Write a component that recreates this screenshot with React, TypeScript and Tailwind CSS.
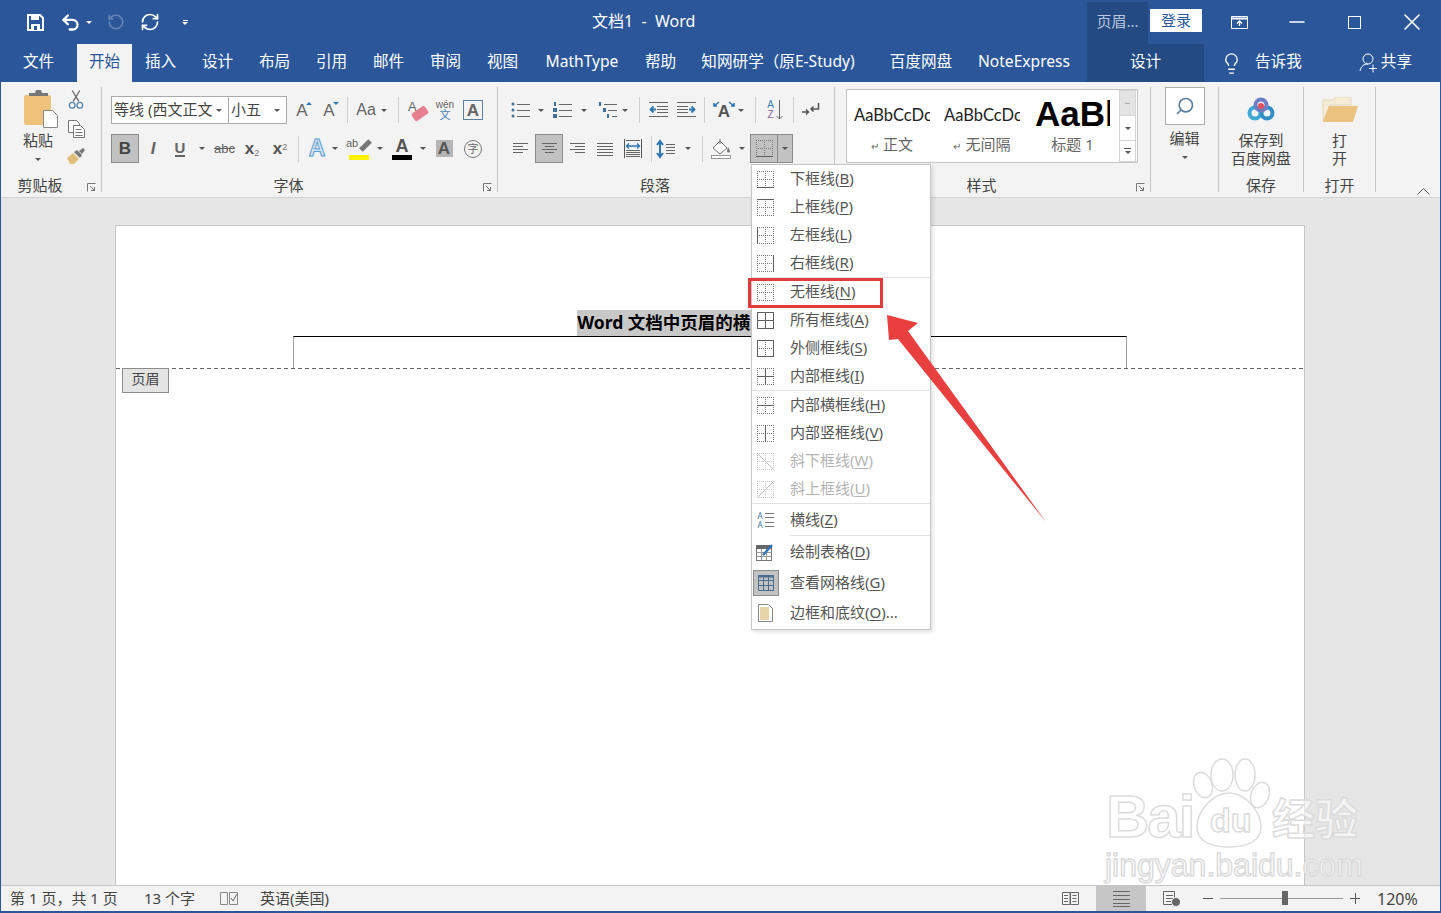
import { ReactNode } from 'react';
import { Lightbulb, Minus, RefreshCw, RotateCw, Search, Undo2, X } from 'lucide-react';

const Caret = ({ white }: { white?: boolean }) => (
  <span className={`block h-0 w-0 border-x-[3px] border-t-[3px] border-x-transparent ${white ? 'border-t-white' : 'border-t-[#555]'}`} />
);

function Cell({ className = '', children }: { className?: string; children?: ReactNode }) {
  return <div className={`flex h-full shrink-0 items-center justify-center ${className}`}>{children}</div>;
}

const CaretCell = ({ className }: { className: string }) => (
  <Cell className={className}>
    <Caret />
  </Cell>
);

const RowSep = ({ className }: { className: string }) => (
  <Cell className={className}>
    <div className="h-[26px] w-px bg-[#cfcfcf]" />
  </Cell>
);

function Launcher() {
  return (
    <svg width="9" height="9" viewBox="0 0 9 9" className="absolute bottom-[5px] right-[5px]" fill="none" stroke="#777">
      <path d="M.5 8.500v-8h8M3 3l4.500 4.500M7.500 4v3.500H4" />
    </svg>
  );
}

function GroupLabel({ label, launcher }: { label: string; launcher?: boolean }) {
  return (
    <div className={`relative mt-auto flex h-[22px] w-full items-center justify-center pb-[1px] leading-none ${launcher ? 'pr-[22px]' : ''}`}>
      {label}
      {launcher && <Launcher />}
    </div>
  );
}

const GroupSep = () => <div className="mt-[5px] h-[105px] w-px shrink-0 bg-[#c6c6c6]" />;

// horizontal text lines, used by the paragraph buttons
function Lines({ rows, w = 16 }: { rows: [number, number, number][]; w?: number }) {
  return (
    <svg width={w} height="16" viewBox={`0 0 ${w} 16`} stroke="#666" fill="none">
      {rows.map(([a, b, y]) => (
        <line key={y} x1={a} x2={b} y1={y + 0.5} y2={y + 0.5} />
      ))}
    </svg>
  );
}

function ListIcon({ kind }: { kind: 'bullet' | 'number' | 'multi' }) {
  return (
    <svg width="20" height="18" viewBox="0 0 20 18" fill="none">
      {kind === 'bullet' && (
        <g fill="#3f6f9f">
          <circle cx="2" cy="3" r="1.500" />
          <circle cx="2" cy="9" r="1.500" />
          <circle cx="2" cy="15" r="1.500" />
        </g>
      )}
      {kind === 'number' && (
        <g fill="#3f6f9f">
          <rect x="1" y="1" width="2" height="4" />
          <rect x="0" y="7" width="4" height="4" />
          <rect x="0" y="13" width="4" height="4" />
        </g>
      )}
      {kind === 'multi' && (
        <g fill="#3f6f9f">
          <rect x="1" y="1" width="2" height="4" />
          <rect x="5" y="7" width="3" height="4" />
          <rect x="9" y="13" width="2" height="4" />
        </g>
      )}
      <g stroke="#666">
        <line x1={6} x2="19" y1="3.500" y2="3.500" />
        <line x1={kind === 'multi' ? 10 : 6} x2="19" y1="9.500" y2="9.500" />
        <line x1={kind === 'multi' ? 14 : 6} x2="19" y1="15.500" y2="15.500" />
      </g>
    </svg>
  );
}

function IndentIcon({ flip }: { flip?: boolean }) {
  return (
    <svg width="19" height="16" viewBox="0 0 19 16" className={`shrink-0 ${flip ? '-scale-x-100' : ''}`} fill="none">
      <path d="M0 .500h19M8 4.500h11M8 7.500h11M8 10.500h11M0 14.500h19" stroke="#666" />
      <path d="M7 7.500H2M4.500 4.500l-3 3 3 3" stroke="#2f76b5" strokeWidth="1.800" />
    </svg>
  );
}

function BorderIcon({ t, b, l, r, h, v, d, u, dim }: { t?: boolean; b?: boolean; l?: boolean; r?: boolean; h?: boolean; v?: boolean; d?: boolean; u?: boolean; dim?: boolean }) {
  const solid = dim ? '#bdbdbd' : '#5f5f5f';
  return (
    <svg width="17" height="17" viewBox="0 0 17 17" fill="none" className="shrink-0">
      <path d="M0 .500h17M0 8.500h17M0 16.500h17M.5 0v17M8.500 0v17M16.500 0v17" stroke={dim ? '#c8c8c8' : '#777'} strokeDasharray="1 1" />
      <g stroke={solid}>
        {t && <path d="M0 .500h17" />}
        {b && <path d="M0 16.500h17" />}
        {l && <path d="M.5 0v17" />}
        {r && <path d="M16.500 0v17" />}
        {h && <path d="M0 8.500h17" />}
        {v && <path d="M8.500 0v17" />}
        {d && <path d="M0 0l17 17" />}
        {u && <path d="M0 17L17 0" />}
      </g>
    </svg>
  );
}

function Mnemonic({ label, k, tail = '' }: { label: string; k: string; tail?: string }) {
  return (
    <span>
      {label}(<span className="underline underline-offset-2">{k}</span>){tail}
    </span>
  );
}

function MenuRow({ icon, label, k, tail, className = 'h-[28px]', dim }: { icon: ReactNode; label: string; k: string; tail?: string; className?: string; dim?: boolean }) {
  return (
    <div className={`flex items-center ${className} ${dim ? 'text-[#b4b4b4]' : 'text-[#555]'}`}>
      <div className="ml-[5px] flex w-[17px] justify-center">{icon}</div>
      <div className="ml-[16px] pb-[1px]">
        <Mnemonic label={label} k={k} tail={tail} />
      </div>
    </div>
  );
}

const MenuSep = () => <div className="h-px bg-[#e3e3e3]" />;

const HrLine = () => (
  <div className="flex items-center gap-[2px] text-[8px] leading-[7px] text-[#3f6f9f]">
    A
    <div className="h-[5px] w-[9px] border-y border-[#777]" />
  </div>
);

function BorderMenu() {
  return (
    <div className="absolute left-[751px] top-[164px] h-[466px] w-[180px] border border-[#c6c6c6] bg-white text-[15px] leading-none shadow-[2px_2px_4px_rgba(0,0,0,0.12)]">
      <MenuRow icon={<BorderIcon b />} label="下框线" k="B" />
      <MenuRow icon={<BorderIcon t />} label="上框线" k="P" />
      <MenuRow icon={<BorderIcon l />} label="左框线" k="L" />
      <MenuRow icon={<BorderIcon r />} label="右框线" k="R" />
      <MenuSep />
      <MenuRow icon={<BorderIcon />} label="无框线" k="N" />
      <MenuRow icon={<BorderIcon t b l r h v />} label="所有框线" k="A" />
      <MenuRow icon={<BorderIcon t b l r />} label="外侧框线" k="S" />
      <MenuRow icon={<BorderIcon h v />} label="内部框线" k="I" />
      <MenuSep />
      <MenuRow icon={<BorderIcon h />} label="内部横框线" k="H" />
      <MenuRow icon={<BorderIcon v />} label="内部竖框线" k="V" />
      <MenuRow icon={<BorderIcon d dim />} label="斜下框线" k="W" dim />
      <MenuRow icon={<BorderIcon u dim />} label="斜上框线" k="U" dim />
      <MenuSep />
      <MenuRow
        className="h-[31px]"
        k="Z"
        label="横线"
        icon={
          <div className="flex flex-col gap-[2px]">
            <HrLine />
            <HrLine />
          </div>
        }
      />
      <div className="ml-[38px] h-px bg-[#e3e3e3]" />
      <MenuRow
        className="h-[32px]"
        k="D"
        label="绘制表格"
        icon={
          <svg width="19" height="19" viewBox="0 0 19 19" fill="none" className="shrink-0">
            <rect x=".5" y="2.500" width="15" height="15" stroke="#777" />
            <rect x="0" y="2" width="16" height="4" fill="#666" />
            <path d="M.5 9.500h15M.5 13.500h15M5.500 6v11M10.500 6v11" stroke="#999" />
            <path d="M7 12l9-10" stroke="#2f76b5" strokeWidth="2.500" />
          </svg>
        }
      />
      <div className="flex h-[30px] items-center text-[#555]">
        <div className="ml-px flex h-[26px] w-[26px] items-center justify-center border border-[#8c8c8c] bg-[#c2c2c2]">
          <svg width="16" height="16" viewBox="0 0 16 16" fill="none" stroke="#4a6f8f">
            <path d="M.5.500h15v15H.5zM.5 5.500h15M.5 10.500h15M5.500.500v15M10.500.500v15" />
            <path d="M0 1.500h16" strokeWidth="2" />
          </svg>
        </div>
        <div className="ml-[11px] pb-[1px]">
          <Mnemonic label="查看网格线" k="G" />
        </div>
      </div>
      <MenuRow
        className="h-[30px]"
        k="O"
        label="边框和底纹"
        tail="..."
        icon={
          <svg width="15" height="18" viewBox="0 0 15 18">
            <path d="M.5.500h10l4 4v13H.5z" fill="#fff" stroke="#888" />
            <rect x="2" y="3" width="9" height="13" fill="#e5d5a8" />
          </svg>
        }
      />
    </div>
  );
}

function Clipboard() {
  return (
    <div className="flex w-[100px] shrink-0 flex-col">
      <div className="ml-[7px] flex h-[93px] pt-[8px]">
        <div className="flex w-[60px] flex-col items-center">
          <svg width="36" height="38" viewBox="0 0 36 38" className="ml-[5px] shrink-0">
            <rect x="1" y="5" width="27" height="30" rx="2" fill="#eec27a" />
            <path d="M6 6V3h6l1-3h5l1 3h6v3z" fill="#777" />
            <path d="M20.500 20.500h9l5 5v12h-14z" fill="#fff" stroke="#888" />
          </svg>
          <div className="mt-[2px] leading-[20px]">粘贴</div>
          <div className="mt-[8px]">
            <Caret />
          </div>
        </div>
        <div className="flex w-[16px] flex-col items-center">
          <svg width="16" height="19" viewBox="0 0 16 20" fill="none" className="shrink-0">
            <path d="M5 12L12 .500M11 12L4 .500" stroke="#666" strokeWidth="1.300" />
            <circle cx="4" cy="16" r="3" stroke="#4f86b5" strokeWidth="1.400" />
            <circle cx="12" cy="16" r="3" stroke="#4f86b5" strokeWidth="1.400" />
          </svg>
          <svg width="17" height="18" viewBox="0 0 17 18" fill="#fff" stroke="#777" className="mt-[11px] shrink-0">
            <path d="M.5.500h8l3 3v9H.5z" />
            <path d="M5.500 5.500h7l4 4v8h-11zM7.500 9.500h6M7.500 12.500h7M7.500 15.500h7" />
          </svg>
          <svg width="18" height="16" viewBox="0 0 18 16" className="mt-[10px] shrink-0">
            <path d="M0 10l6-5 6 6-5 5H3z" fill="#e3bd7a" />
            <path d="M7 4l3-2 5 5-2 3z" fill="#777" />
            <path d="M12 3l4-3 2 2-3 4z" fill="#777" />
          </svg>
        </div>
      </div>
      <GroupLabel label="剪贴板" launcher />
    </div>
  );
}

function Combo({ className, label }: { className: string; label: string }) {
  return (
    <div className={`flex h-full shrink-0 items-center justify-between border border-[#ababab] bg-white pl-[2px] pr-[6px] ${className}`}>
      <span className="whitespace-nowrap pb-[2px] leading-none">{label}</span>
      <Caret />
    </div>
  );
}

const Ltr = ({ className = '', children }: { className?: string; children: ReactNode }) => (
  <span className={`[font-family:'Liberation_Sans',sans-serif] leading-none ${className}`}>{children}</span>
);

function FontGroup() {
  return (
    <div className="flex w-[395px] shrink-0 flex-col">
      <div className="pl-[9px] pt-[14px]">
        <div className="flex h-[28px] items-center">
          <Combo className="w-[118px]" label="等线 (西文正文" />
          <Combo className="-ml-px w-[59px]" label="小五" />
          <Cell className="w-[30px]">
            <Ltr className="relative text-[17px] text-[#666]">
              A<span className="absolute -right-[4px] top-0 block border-x-[3px] border-b-[3px] border-x-transparent border-b-[#2f76b5]" />
            </Ltr>
          </Cell>
          <Cell className="w-[24px]">
            <Ltr className="relative text-[17px] text-[#666]">
              A<span className="absolute -right-[4px] top-0 block border-x-[3px] border-t-[3px] border-x-transparent border-t-[#2f76b5]" />
            </Ltr>
          </Cell>
          <RowSep className="w-[12px]" />
          <Cell className="w-[38px] gap-[5px] pr-[1px]">
            <Ltr className="text-[16px] text-[#666]">Aa</Ltr>
            <Caret />
          </Cell>
          <RowSep className="w-[14px]" />
          <Cell className="w-[26px]">
            <div className="relative h-[20px] w-[20px]">
              <Ltr className="absolute left-0 top-0 text-[13px] text-[#666]">A</Ltr>
              <div className="absolute bottom-[2px] right-0 h-[9px] w-[16px] -rotate-[35deg] rounded-[2px] bg-[#e77f8f]" />
            </div>
          </Cell>
          <Cell className="w-[28px]">
            <div className="flex flex-col items-center leading-none">
              <Ltr className="text-[10px] text-[#666]">wén</Ltr>
              <span className="-mt-[1px] text-[11px] text-[#3f7fb5]">文</span>
            </div>
          </Cell>
          <Cell className="w-[28px]">
            <div className="flex h-[20px] w-[20px] items-center justify-center border border-[#5c7f9e]">
              <Ltr className="text-[17px] font-bold text-[#666]">A</Ltr>
            </div>
          </Cell>
        </div>
        <div className="mt-[10px] flex h-[29px] items-center">
          <Cell className="w-[28px] border border-[#8c8c8c] bg-[#c2c2c2]">
            <Ltr className="text-[17px] font-bold text-[#444]">B</Ltr>
          </Cell>
          <Cell className="w-[28px]">
            <Ltr className="text-[17px] font-bold italic text-[#666]">I</Ltr>
          </Cell>
          <Cell className="w-[26px]">
            <Ltr className="border-b-2 border-[#666] text-[15px] font-bold text-[#666]">U</Ltr>
          </Cell>
          <CaretCell className="w-[18px]" />
          <Cell className="w-[27px]">
            <Ltr className="text-[13px] text-[#666] line-through">abc</Ltr>
          </Cell>
          <Cell className="w-[28px]">
            <Ltr className="text-[17px] font-bold text-[#555]">
              x<sub className="text-[9px] font-normal text-[#777]">2</sub>
            </Ltr>
          </Cell>
          <Cell className="w-[28px]">
            <Ltr className="text-[17px] font-bold text-[#555]">
              x<sup className="text-[9px] font-normal text-[#777]">2</sup>
            </Ltr>
          </Cell>
          <RowSep className="w-[8px]" />
          <Cell className="w-[30px]">
            <Ltr className="text-[23px] font-bold text-[#d5e6f4] [-webkit-text-stroke:1px_#5b9bd5]">A</Ltr>
          </Cell>
          <CaretCell className="w-[6px]" />
          <Cell className="ml-[2px] w-[38px]">
            <div className="flex flex-col items-center">
              <div className="flex h-[15px] items-start">
                <Ltr className="text-[11px] text-[#666]">ab</Ltr>
                <div className="ml-[1px] mt-[5px] h-[5px] w-[13px] -rotate-45 bg-[#777]" />
              </div>
              <div className="mt-[2px] h-[5px] w-[20px] bg-[#fff200]" />
            </div>
          </Cell>
          <CaretCell className="w-[4px]" />
          <Cell className="ml-[2px] w-[36px]">
            <div className="flex flex-col items-center">
              <Ltr className="text-[18px] font-bold text-[#555]">A</Ltr>
              <div className="h-[5px] w-[20px] bg-black" />
            </div>
          </Cell>
          <CaretCell className="w-[6px]" />
          <Cell className="ml-[4px] w-[28px]">
            <div className="flex h-[17px] w-[17px] items-center justify-center bg-[#b5b5b5]">
              <Ltr className="text-[17px] font-bold text-[#555]">A</Ltr>
            </div>
          </Cell>
          <Cell className="w-[30px]">
            <div className="flex h-[18px] w-[18px] items-center justify-center rounded-full border border-[#777] text-[11px] leading-none text-[#666]">字</div>
          </Cell>
        </div>
      </div>
      <GroupLabel label="字体" launcher />
    </div>
  );
}

function ParagraphGroup() {
  return (
    <div className="flex w-[336px] shrink-0 flex-col">
      <div className="pl-[8px] pt-[14px]">
        <div className="flex h-[28px] items-center">
          <Cell className="w-[30px]"><ListIcon kind="bullet" /></Cell>
          <CaretCell className="w-[10px]" />
          <Cell className="w-[34px]"><ListIcon kind="number" /></Cell>
          <CaretCell className="w-[8px]" />
          <Cell className="ml-[6px] w-[28px]"><ListIcon kind="multi" /></Cell>
          <CaretCell className="w-[6px]" />
          <RowSep className="ml-[2px] w-[18px]" />
          <Cell className="w-[20px]"><IndentIcon /></Cell>
          <Cell className="ml-[4px] w-[28px]"><IndentIcon flip /></Cell>
          <RowSep className="w-[8px]" />
          <Cell className="w-[32px]">
            <div className="relative flex h-[20px] w-[22px] items-end justify-center">
              <Ltr className="text-[17px] font-bold text-[#555]">A</Ltr>
              <svg width="22" height="8" viewBox="0 0 22 8" className="absolute left-0 top-0" fill="none" stroke="#2f76b5" strokeWidth="1.600">
                <path d="M1 6l5-4M1 3v3h3M21 6l-5-4M21 3v3h-3" />
              </svg>
            </div>
          </Cell>
          <CaretCell className="w-[2px]" />
          <RowSep className="w-[26px]" />
          <Cell className="w-[14px]">
            <div className="flex shrink-0 items-center gap-[2px]">
              <div className="flex flex-col items-center text-[10px] leading-[10px]">
                <Ltr className="text-[#3f7fb5]">A</Ltr>
                <Ltr className="text-[#8a5fa8]">Z</Ltr>
              </div>
              <svg width="7" height="20" viewBox="0 0 7 20" fill="none" stroke="#666"><path d="M3.500 0v19M.5 16l3 3 3-3" /></svg>
            </div>
          </Cell>
          <RowSep className="w-[22px]" />
          <Cell className="w-[14px]">
            <svg width="18" height="14" viewBox="0 0 18 14" fill="none" className="shrink-0">
              <path d="M16.500 0v6H9M11.500 3.500L9 6l2.500 2.500" stroke="#555" strokeWidth="1.500" />
              <path d="M0 9h6M4 6.500L6.500 9 4 11.500" stroke="#555" strokeWidth="1.500" />
            </svg>
          </Cell>
        </div>
        <div className="mt-[10px] flex h-[29px] items-center">
          <Cell className="w-[29px]"><Lines w={15} rows={[[0, 15, 2], [0, 10, 5], [0, 15, 8], [0, 10, 11]]} /></Cell>
          <Cell className="w-[28px] border border-[#8c8c8c] bg-[#c2c2c2]"><Lines w={15} rows={[[0, 15, 2], [3, 12, 5], [0, 15, 8], [3, 12, 11]]} /></Cell>
          <Cell className="w-[28px]"><Lines w={15} rows={[[0, 15, 2], [5, 15, 5], [0, 15, 8], [5, 15, 11]]} /></Cell>
          <Cell className="w-[28px]"><Lines w={16} rows={[[0, 16, 2], [0, 16, 5], [0, 16, 8], [0, 16, 11], [0, 16, 14]]} /></Cell>
          <Cell className="w-[28px]">
            <svg width="18" height="19" viewBox="0 0 18 19" fill="none" className="shrink-0">
              <path d="M.5 0v19M17.500 0v19" stroke="#555" />
              <path d="M3 7h12M5 4.500L2.500 7 5 9.500M13 4.500L15.500 7 13 9.500" stroke="#2f76b5" strokeWidth="1.400" />
              <path d="M2 11.500h14M2 13.500h14M2 15.500h14M2 17.500h14M2 1.500h14" stroke="#666" />
            </svg>
          </Cell>
          <RowSep className="w-[8px]" />
          <Cell className="w-[20px]">
            <svg width="19" height="20" viewBox="0 0 19 20" fill="none" className="shrink-0">
              <path d="M4 3v14M1 6l3-4 3 4M1 14l3 4 3-4" stroke="#2f76b5" strokeWidth="2" />
              <path d="M10 5.500h9M10 8.500h9M10 11.500h9M10 14.500h9" stroke="#666" />
            </svg>
          </Cell>
          <CaretCell className="w-[26px]" />
          <RowSep className="w-[2px]" />
          <Cell className="w-[36px]">
            <svg width="20" height="20" viewBox="0 0 20 20" fill="none">
              <path d="M2 9l7-7 7 7-7 6z" fill="#fff" stroke="#777" />
              <path d="M9 0v5" stroke="#777" />
              <path d="M17 8c1 2 2 3 2 4a1.500 1.500 0 0 1-3 0c0-1 .5-2 1-4z" fill="#777" />
              <rect x=".5" y="16.500" width="19" height="3" fill="#fff" stroke="#999" />
            </svg>
          </Cell>
          <CaretCell className="w-[6px]" />
          <Cell className="ml-[5px] w-[28px] border border-[#8c8c8c] bg-[#c2c2c2]">
            <BorderIcon b />
          </Cell>
          <Cell className="w-[15px] border border-l-0 border-[#8c8c8c] bg-[#c2c2c2]">
            <Caret />
          </Cell>
        </div>
      </div>
      <GroupLabel label="段落" launcher />
    </div>
  );
}

function StyleItem({ caption }: { caption: string }) {
  return (
    <div className="flex h-full w-[90px] shrink-0 flex-col items-center">
      <div className="mt-[14px] w-[76px] overflow-hidden whitespace-nowrap text-[16.5px] leading-[22px] text-[#222] [font-family:'Lato',sans-serif]">AaBbCcDc</div>
      <div className="mt-[9px] text-[15px] leading-[18px] text-[#666]">
        <span className="mr-[4px] text-[10px]">↵</span>
        {caption}
      </div>
    </div>
  );
}

function StylesGroup() {
  return (
    <div className="flex w-[315px] shrink-0 flex-col">
      <div className="ml-[11px] mt-[7px] flex h-[74px] w-[292px] border border-[#c6c6c6] bg-white">
        <StyleItem caption="正文" />
        <StyleItem caption="无间隔" />
        <div className="flex h-full w-[91px] shrink-0 flex-col items-center">
          <div className="mt-[2px] w-[75px] overflow-hidden whitespace-nowrap text-[35px] font-bold leading-[44px] text-black [font-family:'Liberation_Sans',sans-serif]">AaBb</div>
          <div className="-mt-px text-[15px] leading-[18px] text-[#666]">标题 1</div>
        </div>
        <div className="ml-[1px] flex w-[17px] flex-col">
          <div className="flex h-[26px] items-center justify-center border border-[#d5d5d5] bg-[#e4e4e4]">
            <span className="h-px w-[5px] bg-[#aaa]" />
          </div>
          <div className="flex h-[24px] items-center justify-center border-x border-[#d5d5d5]">
            <Caret />
          </div>
          <div className="flex h-[22px] flex-col items-center justify-center gap-[2px] border border-[#d5d5d5]">
            <span className="h-px w-[7px] bg-[#555]" />
            <Caret />
          </div>
        </div>
      </div>
      <GroupLabel label="样式" launcher />
    </div>
  );
}

function EditGroup() {
  return (
    <div className="flex w-[67px] shrink-0 flex-col items-center pt-[5px]">
      <div className="flex h-[38px] w-[40px] items-center justify-center border border-[#ababab] bg-white">
        <Search size={20} strokeWidth={2} color="#5c7f9e" className="-scale-x-100" />
      </div>
      <div className="mt-[3px] leading-[20px]">编辑</div>
      <div className="mt-[8px]">
        <Caret />
      </div>
    </div>
  );
}

function SaveGroup() {
  return (
    <div className="flex w-[84px] shrink-0 flex-col items-center">
      <svg width="28" height="24" viewBox="0 0 28 24" fill="none" className="mt-[15px] shrink-0">
        <circle cx="8" cy="16" r="5.500" stroke="#3fa9d6" strokeWidth="4" />
        <circle cx="20" cy="16" r="5.500" stroke="#2f8ec4" strokeWidth="4" />
        <circle cx="14" cy="8" r="5.500" stroke="#6d7fc4" strokeWidth="4" />
        <circle cx="14" cy="9" r="3" fill="#e8505b" />
      </svg>
      <div className="mt-[10px] whitespace-nowrap text-center leading-[18px]">
        保存到
        <br />
        百度网盘
      </div>
      <GroupLabel label="保存" />
    </div>
  );
}

function OpenGroup() {
  return (
    <div className="flex w-[71px] shrink-0 flex-col items-center">
      <svg width="36" height="25" viewBox="0 0 36 25" className="mt-[15px] shrink-0">
        <path d="M1 24V3h10l3-3h15v8H8z" fill="#f6ecd6" stroke="#dcc7a0" strokeWidth=".6" />
        <path d="M7 9h29l-5 16H1z" fill="#ecc27f" />
      </svg>
      <div className="mt-[9px] text-center leading-[18px]">
        打
        <br />
        开
      </div>
      <GroupLabel label="打开" />
    </div>
  );
}

function Ribbon() {
  return (
    <div className="flex h-[116px] shrink-0 border-b border-[#d2d2d2] bg-[#f3f3f3] text-[15px] text-[#444]">
      <Clipboard />
      <GroupSep />
      <FontGroup />
      <GroupSep />
      <ParagraphGroup />
      <GroupSep />
      <StylesGroup />
      <GroupSep />
      <EditGroup />
      <GroupSep />
      <SaveGroup />
      <GroupSep />
      <OpenGroup />
      <GroupSep />
      <div className="ml-auto mr-[10px] mt-[106px]">
        <svg width="13" height="7" viewBox="0 0 13 7" fill="none" stroke="#666">
          <path d="M.5 6.500l6-6 6 6" />
        </svg>
      </div>
    </div>
  );
}

const tabs: [string, string][] = [
  ['插入', 'w-[57px]'],
  ['设计', 'w-[57px]'],
  ['布局', 'w-[57px]'],
  ['引用', 'w-[57px]'],
  ['邮件', 'w-[57px]'],
  ['审阅', 'w-[57px]'],
  ['视图', 'w-[57px]'],
  ['MathType', 'w-[102px]'],
  ['帮助', 'w-[55px]'],
  ['知网研学（原E-Study)', 'w-[180px]'],
  ['百度网盘', 'w-[106px]'],
  ['NoteExpress', 'w-[100px]'],
];

function TabBar() {
  return (
    <div className="flex h-[38px] shrink-0 items-center text-[15.6px] leading-none text-white">
      <Cell className="w-[76px] pb-[2px] pr-[1px]">文件</Cell>
      <Cell className="w-[55px] bg-[#f3f3f3] pb-[2px] text-[#2b579a]">开始</Cell>
      {tabs.map(([t, w]) => (
        <Cell key={t} className={`${w} whitespace-nowrap pb-[2px]`}>
          {t}
        </Cell>
      ))}
      <Cell className="ml-[13px] w-[117px] bg-[#234a82] pb-[2px]">设计</Cell>
      <Cell className="ml-[2px] w-[50px]">
        <Lightbulb size={23} strokeWidth={1.4} />
      </Cell>
      <span className="-ml-px whitespace-nowrap pb-[2px]">告诉我</span>
      <svg width="19" height="20" viewBox="0 0 19 20" fill="none" stroke="white" className="ml-[57px] shrink-0">
        <circle cx="9" cy="6" r="5" />
        <path d="M1 18c1-5 4-7 8-7M10 15.500h8M14 11.500v8" />
      </svg>
      <span className="ml-[3px] whitespace-nowrap pb-[2px]">共享</span>
    </div>
  );
}

function TitleBar() {
  return (
    <div className="flex h-[44px] shrink-0 text-[16px] leading-none text-white">
      <div className="flex w-[591px] shrink-0 items-center">
        <svg width="17" height="17" viewBox="0 0 17 17" fill="none" className="ml-[26px]">
          <path d="M1 1h12l3 3v12H1z" stroke="white" strokeWidth="2" />
          <path d="M4 1h8v5H4zM4 10h9v6H4z" fill="white" />
          <rect x="7" y="12" width="3" height="4" fill="#2b579a" />
        </svg>
        <Undo2 size={21} strokeWidth={2.6} className="ml-[16px]" />
        <div className="ml-[5px]">
          <Caret white />
        </div>
        <RotateCw size={18} strokeWidth={2.2} color="#6485b6" className="ml-[15px] -scale-x-100" />
        <RefreshCw size={20} strokeWidth={2} className="ml-[15px]" />
        <div className="ml-[22px] flex flex-col items-center gap-[1px]">
          <span className="h-px w-[5px] bg-white" />
          <Caret white />
        </div>
      </div>
      <div className="flex-1 self-center whitespace-pre pb-[3px]">文档1  -  Word</div>
      <div className="mt-[2px] flex w-[61px] items-center justify-center bg-[#234a82] pb-[4px] text-[15px] text-[#b9c6dd]">页眉...</div>
      <div className="ml-[2px] mt-[9px] flex h-[23px] w-[52px] items-center justify-center bg-white pb-[1px] text-[15px] text-[#2b579a]">登录</div>
      <Cell className="ml-[8px] w-[58px]">
        <svg width="17" height="13" viewBox="0 0 17 13" fill="none" stroke="white">
          <path d="M.5.500h16v12H.5z" />
          <path d="M1 2.500h15" strokeWidth="2" />
          <path d="M8.500 10V5M6 7.500l2.500-2.500L11 7.500" strokeWidth="1.400" />
        </svg>
      </Cell>
      <Cell className="w-[57px]"><Minus size={24} strokeWidth={1.5} /></Cell>
      <Cell className="w-[58px]"><div className="h-[13px] w-[13px] border-[1.5px] border-white" /></Cell>
      <Cell className="w-[57px]"><X size={28} strokeWidth={1.4} /></Cell>
    </div>
  );
}

function Page() {
  return (
    <div className="relative flex h-full w-[1190px] flex-col border-x border-t border-[#c6c6c6] bg-white pt-[84px]">
      <div className="flex h-[26px] justify-center">
        <span className="h-full whitespace-nowrap bg-[#c8c8c8] pr-[5px] text-[17.5px] font-bold leading-[24px] text-black">Word 文档中页眉的横线怎么去除</span>
      </div>
      <div className="relative ml-[177px] h-[32px] w-[834px] border-x border-t border-x-[#a0a0a0] border-t-black" />
      <div className="h-px bg-[repeating-linear-gradient(90deg,#666_0_4px,transparent_4px_7px)]" />
      <div className="absolute left-[6px] top-[142px] flex h-[25px] w-[47px] items-center justify-center border border-[#8c8c8c] bg-[#e4e4e4] pb-[3px] text-[14px] leading-none text-[#444]">页眉</div>
    </div>
  );
}

function StatusBar() {
  return (
    <div className="flex h-[26px] shrink-0 items-center border-t border-[#c6c6c6] bg-[#f3f3f3] text-[15px] leading-none text-[#444]">
      <span className="ml-[9px] w-[134px] whitespace-nowrap">第 1 页，共 1 页</span>
      <span className="w-[76px] whitespace-nowrap">13 个字</span>
      <svg width="18" height="15" viewBox="0 0 18 15" fill="none" stroke="#888" className="shrink-0">
        <path d="M.5 1.500h7v12h-7zM9.500 1.500h8v12h-8z" />
        <path d="M11 7l2 3 4-7" stroke="#666" />
      </svg>
      <span className="ml-[22px] w-[70px] whitespace-nowrap">英语(美国)</span>
      <svg width="17" height="15" viewBox="0 0 17 15" fill="none" stroke="#666" className="ml-[732px] shrink-0">
        <path d="M.5 1.500h7.500v12H.5zM8.500 1.500H16.500v12H8.500zM2 4.500h4M2 7.500h4M2 10.500h4M10.500 4.500h4M10.500 7.500h4M10.500 10.500h4" />
      </svg>
      <Cell className="ml-[17px] w-[50px] bg-[#c6c6c6]">
        <Lines w={17} rows={[[0, 17, 0], [0, 17, 4], [0, 17, 8], [0, 17, 12], [0, 17, 15]]} />
      </Cell>
      <svg width="18" height="16" viewBox="0 0 18 16" fill="none" className="ml-[17px] shrink-0">
        <path d="M.5.500h11v13H.5zM3 4.500h7M3 7.500h7M3 10.500h5" stroke="#666" />
        <circle cx="13" cy="11" r="4.500" fill="#666" stroke="#f3f3f3" />
      </svg>
      <span className="ml-[22px] h-px w-[10px] bg-[#555]" />
      <div className="relative ml-[7px] h-px w-[123px] bg-[#999]">
        <div className="absolute -top-[7px] left-[62px] h-[14px] w-[6px] bg-[#666]" />
      </div>
      <span className="relative ml-[7px] h-px w-[10px] bg-[#555]">
        <span className="absolute -top-[5px] left-[5px] h-[11px] w-px bg-[#555]" />
      </span>
      <span className="ml-[17px] text-[16px]">120%</span>
    </div>
  );
}

// baidu jingyan stamp laid over the bottom right corner
function Watermark() {
  const outline = 'text-white/60 [-webkit-text-stroke:1.5px_#dcdcdc]';
  return (
    <div className="pointer-events-none absolute left-[1100px] top-[750px] h-[135px] w-[270px] leading-none">
      <svg width="90" height="100" viewBox="0 0 90 100" fill="none" stroke="#dcdcdc" strokeWidth="1.500" className="absolute left-[88px] top-[5px]">
        <ellipse cx="15" cy="30" rx="9" ry="13" transform="rotate(-20 15 30)" />
        <ellipse cx="34" cy="20" rx="11" ry="16" />
        <ellipse cx="57" cy="20" rx="10" ry="16" />
        <ellipse cx="72" cy="40" rx="9" ry="13" transform="rotate(20 72 40)" />
        <path d="M41 38c16 0 32 18 32 34 0 12-10 20-32 20S9 84 9 72c0-16 16-34 32-34z" />
      </svg>
      <span className={`absolute left-[6px] top-[37px] text-[60px] font-bold tracking-[-2px] [font-family:'Liberation_Sans',sans-serif] ${outline}`}>Bai</span>
      <span className={`absolute left-[110px] top-[53px] text-[34px] font-bold [font-family:'Liberation_Sans',sans-serif] ${outline}`}>du</span>
      <span className={`absolute left-[172px] top-[47px] text-[43px] font-bold ${outline}`}>经验</span>
      <span className={`absolute left-[5px] top-[99px] whitespace-nowrap text-[32px] [font-family:'Liberation_Sans',sans-serif] ${outline}`}>jingyan.baidu.com</span>
    </div>
  );
}

export default function App() {
  return (
    <div className="relative flex h-[913px] w-[1441px] flex-col overflow-hidden bg-[#2b579a] px-px pb-[2px] [font-family:'Noto_Sans','Noto_Sans_CJK_SC',sans-serif]">
      <TitleBar />
      <TabBar />
      <Ribbon />
      <div className="min-h-0 flex-1 overflow-hidden bg-[#e6e6e6] pl-[114px] pt-[27px]">
        <Page />
      </div>
      <StatusBar />
      <BorderMenu />
      <div className="absolute left-[748px] top-[278px] h-[30px] w-[135px] border-[3px] border-[#e0393e]" />
      <svg width="170" height="215" viewBox="0 0 170 215" className="absolute left-[880px] top-[310px]">
        <path d="M7 5l31 8-10 8L166 212 18 29 9 30z" fill="#ea3f3f" />
      </svg>
      <Watermark />
    </div>
  );
}
